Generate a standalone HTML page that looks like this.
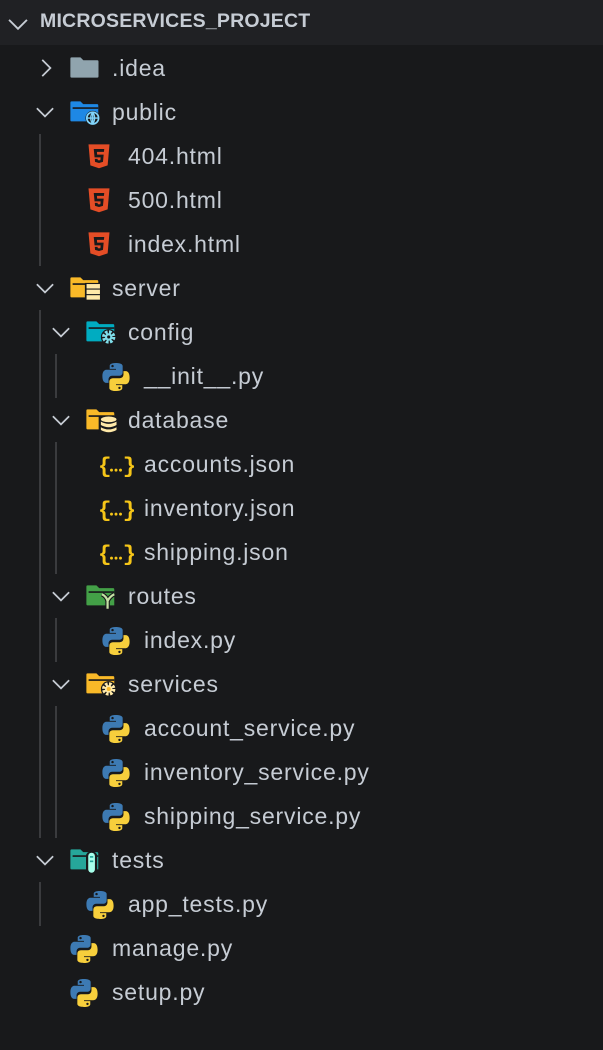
<!DOCTYPE html>
<html><head><meta charset="utf-8"><style>
html,body{margin:0;padding:0;width:603px;height:1050px;background:#18191b;overflow:hidden}
body{position:relative;font-family:"Liberation Sans",sans-serif;color:#c6ccd4}
.hdr{position:absolute;left:0;top:0;width:603px;height:45px;background:#202124}
.hdr span{position:absolute;left:40px;top:10px;font-weight:bold;font-size:19.5px;color:#c6ccd4;letter-spacing:0.2px}
.r{position:absolute;height:44px;line-height:44px;font-size:23px;letter-spacing:0.8px;white-space:nowrap}
.ic{position:absolute;overflow:visible}
.fd{width:34px;height:29px}
.g{position:absolute;width:2px;background:#3a3b3e}
</style></head><body>
<svg width="0" height="0" style="position:absolute">
<defs>
<symbol id="chv" viewBox="0 0 16 16"><path d="M1.5 5 L8 11.5 L14.5 5" fill="none" stroke="#c6ccd4" stroke-width="1.4"/></symbol>
<symbol id="chr" viewBox="0 0 16 16"><path d="M5 1.5 L11.5 8 L5 14.5" fill="none" stroke="#c6ccd4" stroke-width="1.4"/></symbol>
<symbol id="html" viewBox="0 0 24 24"><path d="M3 2 L21 2 L19.4 20 L12 22.5 L4.6 20 Z" fill="#e44d26"/><path d="M7.5 6 H16.5 L16.2 8.5 H10.2 L10.4 10.8 H16 L15.4 17 L12 18 L8.6 17 L8.4 14.5 H10.8 L10.9 15.5 L12 15.8 L13.2 15.5 L13.4 13.2 H8.2 Z" fill="#18191b"/></symbol>
<symbol id="py" viewBox="0 0 24 24"><path d="M11.8 1.5 C7 1.5 7.3 3.6 7.3 3.6 V5.9 H12 V6.6 H5.1 C5.1 6.6 1.8 6.2 1.8 11.4 C1.8 16.6 4.7 16.4 4.7 16.4 H6.4 V14 C6.4 14 6.3 11.1 9.3 11.1 H14.2 C14.2 11.1 17 11.2 17 8.4 V3.9 C17 3.9 17.4 1.5 11.8 1.5 Z" fill="#3d7ab3"/><circle cx="9.4" cy="3.8" r="0.9" fill="#18191b"/><path d="M12.2 22.5 C17 22.5 16.7 20.4 16.7 20.4 V18.1 H12 V17.4 H18.9 C18.9 17.4 22.2 17.8 22.2 12.6 C22.2 7.4 19.3 7.6 19.3 7.6 H17.6 V10 C17.6 10 17.7 12.9 14.7 12.9 H9.8 C9.8 12.9 7 12.8 7 15.6 V20.1 C7 20.1 6.6 22.5 12.2 22.5 Z" fill="#f7cf3c"/><circle cx="14.6" cy="20.2" r="0.9" fill="#18191b"/></symbol>
<symbol id="json" viewBox="0 0 32 24"><text x="0" y="19" font-family="Liberation Mono,monospace" font-size="20" font-weight="bold" fill="#f5c518">{</text><text x="22" y="19" font-family="Liberation Mono,monospace" font-size="20" font-weight="bold" fill="#f5c518">}</text><circle cx="12" cy="17" r="1.3" fill="#f5c518"/><circle cx="16" cy="17" r="1.3" fill="#f5c518"/><circle cx="20" cy="17" r="1.3" fill="#f5c518"/></symbol>
<symbol id="fgray" viewBox="0 0 28 24"><path d="M1 4 Q1 3 2 3 H10 L12.5 5.5 H25 Q26 5.5 26 6.5 V20 Q26 21 25 21 H2 Q1 21 1 20 Z" fill="#90a4ae"/></symbol>
</defs></svg>

<div class="hdr"><svg class="ic" style="left:7px;top:13px" width="22" height="22"><use href="#chv" width="22" height="22"/></svg><span>MICROSERVICES_PROJECT</span></div>

<div class="g" style="left:39px;top:134px;height:132px"></div>
<div class="g" style="left:39px;top:310px;height:528px"></div>
<div class="g" style="left:55px;top:354px;height:44px"></div>
<div class="g" style="left:55px;top:442px;height:132px"></div>
<div class="g" style="left:55px;top:618px;height:44px"></div>
<div class="g" style="left:55px;top:706px;height:132px"></div>
<div class="g" style="left:39px;top:882px;height:44px"></div>

<svg class="ic" style="left:36px;top:58px" width="20" height="20"><use href="#chr" width="20" height="20"/></svg>
<svg class="ic" style="left:69px;top:54px" width="32" height="27"><use href="#fgray" width="32" height="27"/></svg>
<div class="r" style="left:112px;top:46px">.idea</div>

<svg class="ic" style="left:35px;top:102px" width="20" height="20"><use href="#chv" width="20" height="20"/></svg>
<svg class="ic fd" style="left:69px;top:98px" viewBox="0 0 30 26"><path d="M1 4 Q1 3 2 3 H10 L12.5 5.5 H25 Q26 5.5 26 6.5 V21 H2 Q1 21 1 20 Z" fill="#1e88e5"/><path d="M3 9 H26" stroke="#18191b" stroke-width="1.5"/><circle cx="21" cy="18" r="6.5" fill="#18191b"/><circle cx="21" cy="18" r="5.3" fill="none" stroke="#81d4fa" stroke-width="1.5"/><path d="M15.7 18 H26.3 M21 12.7 V23.3 M21 12.7 Q17.5 18 21 23.3 M21 12.7 Q24.5 18 21 23.3" fill="none" stroke="#81d4fa" stroke-width="1.2"/></svg>
<div class="r" style="left:112px;top:90px">public</div>

<svg class="ic" style="left:85px;top:142px" width="28" height="28"><use href="#html" width="28" height="28"/></svg>
<div class="r" style="left:128px;top:134px">404.html</div>
<svg class="ic" style="left:85px;top:186px" width="28" height="28"><use href="#html" width="28" height="28"/></svg>
<div class="r" style="left:128px;top:178px">500.html</div>
<svg class="ic" style="left:85px;top:230px" width="28" height="28"><use href="#html" width="28" height="28"/></svg>
<div class="r" style="left:128px;top:222px">index.html</div>

<svg class="ic" style="left:35px;top:278px" width="20" height="20"><use href="#chv" width="20" height="20"/></svg>
<svg class="ic fd" style="left:69px;top:274px" viewBox="0 0 30 26"><path d="M1 4 Q1 3 2 3 H10 L12.5 5.5 H25 Q26 5.5 26 6.5 V21 H2 Q1 21 1 20 Z" fill="#f9b928"/><path d="M3 9 H26" stroke="#18191b" stroke-width="1.5"/><rect x="14" y="8" width="15" height="16" fill="#18191b"/><rect x="15.5" y="9" width="12" height="4" fill="#ffe9a8"/><rect x="15.5" y="14" width="12" height="4" fill="#ffe9a8"/><rect x="15.5" y="19" width="12" height="4" fill="#ffe9a8"/></svg>
<div class="r" style="left:112px;top:266px">server</div>

<svg class="ic" style="left:51px;top:322px" width="20" height="20"><use href="#chv" width="20" height="20"/></svg>
<svg class="ic fd" style="left:85px;top:318px" viewBox="0 0 30 26"><path d="M1 4 Q1 3 2 3 H10 L12.5 5.5 H25 Q26 5.5 26 6.5 V21 H2 Q1 21 1 20 Z" fill="#00acc1"/><path d="M3 9 H26" stroke="#18191b" stroke-width="1.5"/><circle cx="21" cy="17" r="7" fill="#18191b"/><circle cx="21" cy="17" r="4.3" fill="none" stroke="#80deea" stroke-width="3.4" stroke-dasharray="2.2 1.2"/><circle cx="21" cy="17" r="3.3" fill="#80deea"/><circle cx="21" cy="17" r="1.4" fill="#18191b"/></svg>
<div class="r" style="left:128px;top:310px">config</div>

<svg class="ic" style="left:100px;top:361px" width="32" height="32"><use href="#py" width="32" height="32"/></svg>
<div class="r" style="left:144px;top:354px">__init__.py</div>

<svg class="ic" style="left:51px;top:410px" width="20" height="20"><use href="#chv" width="20" height="20"/></svg>
<svg class="ic fd" style="left:85px;top:406px" viewBox="0 0 30 26"><path d="M1 4 Q1 3 2 3 H10 L12.5 5.5 H25 Q26 5.5 26 6.5 V21 H2 Q1 21 1 20 Z" fill="#f9b928"/><path d="M3 9 H26" stroke="#18191b" stroke-width="1.5"/><rect x="12" y="9" width="18" height="16" fill="#18191b"/><ellipse cx="21" cy="12" rx="7" ry="2.6" fill="#ffe9a8"/><path d="M14 14 Q21 18 28 14 V17 Q21 21 14 17 Z M14 19 Q21 23 28 19 V21.5 Q21 25.5 14 21.5 Z" fill="#ffe9a8"/></svg>
<div class="r" style="left:128px;top:398px">database</div>

<svg class="ic" style="left:98px;top:451px" width="36" height="27"><use href="#json" width="36" height="27"/></svg>
<div class="r" style="left:144px;top:442px">accounts.json</div>
<svg class="ic" style="left:98px;top:495px" width="36" height="27"><use href="#json" width="36" height="27"/></svg>
<div class="r" style="left:144px;top:486px">inventory.json</div>
<svg class="ic" style="left:98px;top:539px" width="36" height="27"><use href="#json" width="36" height="27"/></svg>
<div class="r" style="left:144px;top:530px">shipping.json</div>

<svg class="ic" style="left:51px;top:586px" width="20" height="20"><use href="#chv" width="20" height="20"/></svg>
<svg class="ic fd" style="left:85px;top:582px" viewBox="0 0 30 26"><path d="M1 4 Q1 3 2 3 H10 L12.5 5.5 H25 Q26 5.5 26 6.5 V21 H2 Q1 21 1 20 Z" fill="#43a047"/><path d="M3 9 H26" stroke="#18191b" stroke-width="1.5"/><path d="M15 11 Q19 13 20 17 V24 M26 11 Q22 13 20 17" fill="none" stroke="#18191b" stroke-width="4"/><path d="M15 11 Q19 13 20 17 V24 M26 11 Q22 13 20 17" fill="none" stroke="#c5e1a5" stroke-width="2"/></svg>
<div class="r" style="left:128px;top:574px">routes</div>

<svg class="ic" style="left:100px;top:625px" width="32" height="32"><use href="#py" width="32" height="32"/></svg>
<div class="r" style="left:144px;top:618px">index.py</div>

<svg class="ic" style="left:51px;top:674px" width="20" height="20"><use href="#chv" width="20" height="20"/></svg>
<svg class="ic fd" style="left:85px;top:670px" viewBox="0 0 30 26"><path d="M1 4 Q1 3 2 3 H10 L12.5 5.5 H25 Q26 5.5 26 6.5 V21 H2 Q1 21 1 20 Z" fill="#f9b928"/><path d="M3 9 H26" stroke="#18191b" stroke-width="1.5"/><circle cx="21" cy="17" r="7" fill="#18191b"/><circle cx="21" cy="17" r="4.3" fill="none" stroke="#ffe9a8" stroke-width="3.4" stroke-dasharray="2.2 1.2"/><circle cx="21" cy="17" r="3.3" fill="#ffe9a8"/><circle cx="21" cy="17" r="1.8" fill="#f9b928"/></svg>
<div class="r" style="left:128px;top:662px">services</div>

<svg class="ic" style="left:100px;top:713px" width="32" height="32"><use href="#py" width="32" height="32"/></svg>
<div class="r" style="left:144px;top:706px">account_service.py</div>
<svg class="ic" style="left:100px;top:757px" width="32" height="32"><use href="#py" width="32" height="32"/></svg>
<div class="r" style="left:144px;top:750px">inventory_service.py</div>
<svg class="ic" style="left:100px;top:801px" width="32" height="32"><use href="#py" width="32" height="32"/></svg>
<div class="r" style="left:144px;top:794px">shipping_service.py</div>

<svg class="ic" style="left:35px;top:850px" width="20" height="20"><use href="#chv" width="20" height="20"/></svg>
<svg class="ic fd" style="left:69px;top:846px" viewBox="0 0 30 26"><path d="M1 4 Q1 3 2 3 H10 L12.5 5.5 H25 Q26 5.5 26 6.5 V21 H2 Q1 21 1 20 Z" fill="#26a69a"/><path d="M3 9 H26" stroke="#18191b" stroke-width="1.5"/><rect x="15" y="5" width="10" height="21" rx="4" fill="#18191b"/><rect x="17" y="6" width="6" height="18" rx="3" fill="#a7ffeb"/><rect x="18.5" y="9" width="3" height="1.5" fill="#26a69a"/><rect x="18.5" y="13" width="3" height="1.5" fill="#26a69a"/></svg>
<div class="r" style="left:112px;top:838px">tests</div>

<svg class="ic" style="left:84px;top:889px" width="32" height="32"><use href="#py" width="32" height="32"/></svg>
<div class="r" style="left:128px;top:882px">app_tests.py</div>

<svg class="ic" style="left:68px;top:933px" width="32" height="32"><use href="#py" width="32" height="32"/></svg>
<div class="r" style="left:112px;top:926px">manage.py</div>
<svg class="ic" style="left:68px;top:977px" width="32" height="32"><use href="#py" width="32" height="32"/></svg>
<div class="r" style="left:112px;top:970px">setup.py</div>
</body></html>
